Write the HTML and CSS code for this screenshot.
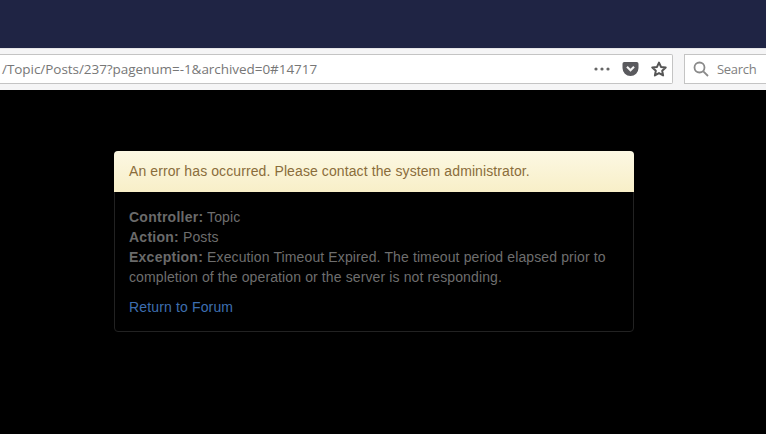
FILE: index.html
```html
<!DOCTYPE html>
<html lang="en">
<head>
<meta charset="utf-8">
<title>Error</title>
<link rel="stylesheet" href="styles.css">
</head>
<body>
<div class="titlebar"></div>
<div class="toolbar">
  <div class="urlbar">
    <span class="url">/Topic/Posts/237?pagenum=-1&amp;archived=0#14717</span>
    <span class="url-actions">
      <svg class="ico-dots" width="16" height="4" viewBox="0 0 16 4"><circle cx="2" cy="2" r="1.6"/><circle cx="8" cy="2" r="1.6"/><circle cx="14" cy="2" r="1.6"/></svg>
      <svg class="ico-pocket" width="17" height="14" viewBox="0 0 16 14"><path d="M1.8 0h12.4A1.8 1.8 0 0 1 16 1.8V6a8 8 0 0 1-16 0V1.8A1.8 1.8 0 0 1 1.8 0z"/><path class="chev" d="M4.5 4.8 8 8.2l3.5-3.4"/></svg>
      <svg class="ico-star" width="16" height="16" viewBox="0 0 16 16"><path d="M8 1.6l2 4.3 4.7.6-3.5 3.2.9 4.7L8 12.1l-4.1 2.3.9-4.7L1.300 6.500l4.700-.6z"/></svg>
    </span>
  </div>
  <div class="searchbar">
    <svg class="ico-search" width="16" height="16" viewBox="0 0 16 16"><circle cx="6.500" cy="6.500" r="5"/><path d="M10.300 10.300 15 15"/></svg>
    <span class="search-text">Search</span>
  </div>
</div>
<main class="page">
  <section class="panel">
    <header class="panel-heading">An error has occurred. Please contact the system administrator.</header>
    <div class="panel-body">
      <p class="details"><strong>Controller:</strong> Topic<br>
      <strong>Action:</strong> Posts<br>
      <strong>Exception:</strong> Execution Timeout Expired. The timeout period elapsed prior to completion of the operation or the server is not responding.</p>
      <a class="back" href="#">Return to Forum</a>
    </div>
  </section>
</main>
</body>
</html>
```
FILE: styles.css
```css
html, body {
  margin: 0;
  height: 100%;
  background: #000;
  overflow: hidden;
}
.titlebar {
  height: 48px;
  background: #1f2444;
}
.toolbar {
  box-sizing: border-box;
  height: 42px;
  display: flex;
  padding-top: 5px;
  background: #f5f5f6;
  border-top: 1px solid #e4e4e8;
}
.urlbar, .searchbar {
  box-sizing: border-box;
  height: 30px;
  display: flex;
  align-items: center;
  background: #fff;
  border: 1px solid #c4c4c4;
}
.urlbar {
  width: 673px;
  border-left: 0;
  border-radius: 0 2px 2px 0;
  padding: 0 5px 0 2px;
  justify-content: space-between;
}
.url {
  font: 13.500px "Open Sans", sans-serif;
  letter-spacing: -0.05px;
  color: #777;
  white-space: nowrap;
}
.url-actions {
  display: flex;
  align-items: center;
  gap: 12px;
}
.ico-dots { fill: #666; }
.ico-pocket { fill: #5a5a5e; }
.ico-pocket .chev { fill: none; stroke: #f5f5f5; stroke-width: 2.200; }
.ico-star { fill: #fff; stroke: #555; stroke-width: 2; stroke-linejoin: round; }
.searchbar {
  flex: 1;
  margin-left: 11px;
  margin-right: -10px;
  padding-left: 8px;
  gap: 8px;
}
.ico-search { fill: none; stroke: #8a8a8a; stroke-width: 1.800; }
.search-text {
  font: 13px "Open Sans", sans-serif;
  letter-spacing: -0.3px;
  color: #808080;
}
.page {
  padding: 61px 0 0 114px;
}
.panel {
  box-sizing: border-box;
  width: 520px;
  height: 181px;
  border: 1px solid #222;
  border-radius: 4px;
  font: 14px/20px "Liberation Sans", Arial, sans-serif;
  letter-spacing: 0.1px;
  color: #6e6e6e;
}
.panel-heading {
  margin: -1px -1px 0;
  height: 41px;
  box-sizing: border-box;
  padding: 10px 15px;
  border-radius: 4px 4px 0 0;
  background: linear-gradient(#fcf8e3, #f8efc8);
  color: #8a6d3b;
}
.panel-body {
  padding: 15px 14px;
}
.details {
  margin: 0 0 10px;
  letter-spacing: 0.12px;
}
.details strong {
  color: #6a6a6a;
  letter-spacing: 0.25px;
}
.back {
  color: #3e6fb0;
  text-decoration: none;
  letter-spacing: 0.15px;
}
```
